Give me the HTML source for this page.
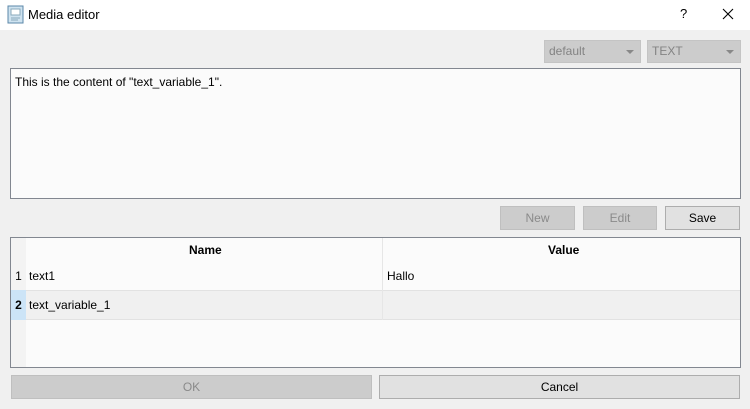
<!DOCTYPE html><html><head><style>
body{margin:0;width:750px;height:409px;background:#f0f0f0;font-family:"Liberation Sans",sans-serif;font-size:12px;position:relative;overflow:hidden;color:#000}
div{position:absolute;box-sizing:border-box}
.btn{border:1px solid #adadad;background:#e1e1e1;text-align:center;line-height:22px}
.dis{background:#cccccc;border-color:#bfbfbf;color:#8a8a8a}
.cb{background:#cccccc;border:1px solid #c4c4c4;color:#838383;line-height:20px;padding-left:4px}
.cb:after{content:"";position:absolute;right:6px;top:9px;border:4px solid transparent;border-top:4px solid #888;}
</style></head><body>
<div style="left:0;top:0;width:750px;height:30px;background:#fff"></div>
<svg style="position:absolute;left:7px;top:5px" width="18" height="19"><rect x="1" y="1" width="15" height="17" fill="#cfe3f0" stroke="#5b87a8"/><rect x="4" y="4" width="9" height="6" fill="#fff" stroke="#8ab"/><path d="M4 13h9M4 15h7" stroke="#8ab"/></svg>
<div style="left:28px;top:7px;font-size:13px">Media editor</div>
<div style="left:680px;top:6px;font-size:13px">?</div>
<svg style="position:absolute;left:722px;top:8px" width="12" height="12"><path d="M1 1L11 11M11 1L1 11" stroke="#000" stroke-width="1.1"/></svg>
<div class="cb" style="left:544px;top:40px;width:97px;height:23px">default</div>
<div class="cb" style="left:647px;top:40px;width:94px;height:23px">TEXT</div>
<div style="left:10px;top:68px;width:731px;height:131px;background:#fbfbfb;border:1px solid #828790;padding:6px 4px">This is the content of "text_variable_1".</div>
<div class="btn dis" style="left:500px;top:206px;width:75px;height:24px">New</div>
<div class="btn dis" style="left:583px;top:206px;width:74px;height:24px">Edit</div>
<div class="btn" style="left:665px;top:206px;width:75px;height:24px">Save</div>
<div style="left:10px;top:237px;width:731px;height:131px;background:#fbfbfb;border:1px solid #828790">
 <div style="left:0;top:0;width:15px;height:129px;background:#f3f3f3"></div>
 <div style="left:15px;top:0;width:714px;height:24px;line-height:24px;font-weight:bold"><span style="position:absolute;left:163px">Name</span><span style="position:absolute;left:522px">Value</span></div>
 <div style="left:15px;top:52px;width:714px;height:30px;background:#f0f0f0;border-top:1px solid #e2e2e2;border-bottom:1px solid #e2e2e2"></div>
 <div style="left:371px;top:0;width:1px;height:82px;background:#e6e6e6"></div>
 <div style="left:0;top:24px;width:15px;height:28px;line-height:28px;text-align:center">1</div>
 <div style="left:18px;top:24px;line-height:28px">text1</div>
 <div style="left:376px;top:24px;line-height:28px">Hallo</div>
 <div style="left:0;top:52px;width:15px;height:30px;background:#cce4f7;line-height:30px;text-align:center;font-weight:bold">2</div>
 <div style="left:18px;top:52px;line-height:30px">text_variable_1</div>
</div>
<div class="btn dis" style="left:11px;top:375px;width:361px;height:24px">OK</div>
<div class="btn" style="left:379px;top:375px;width:361px;height:24px">Cancel</div>
</body></html>
